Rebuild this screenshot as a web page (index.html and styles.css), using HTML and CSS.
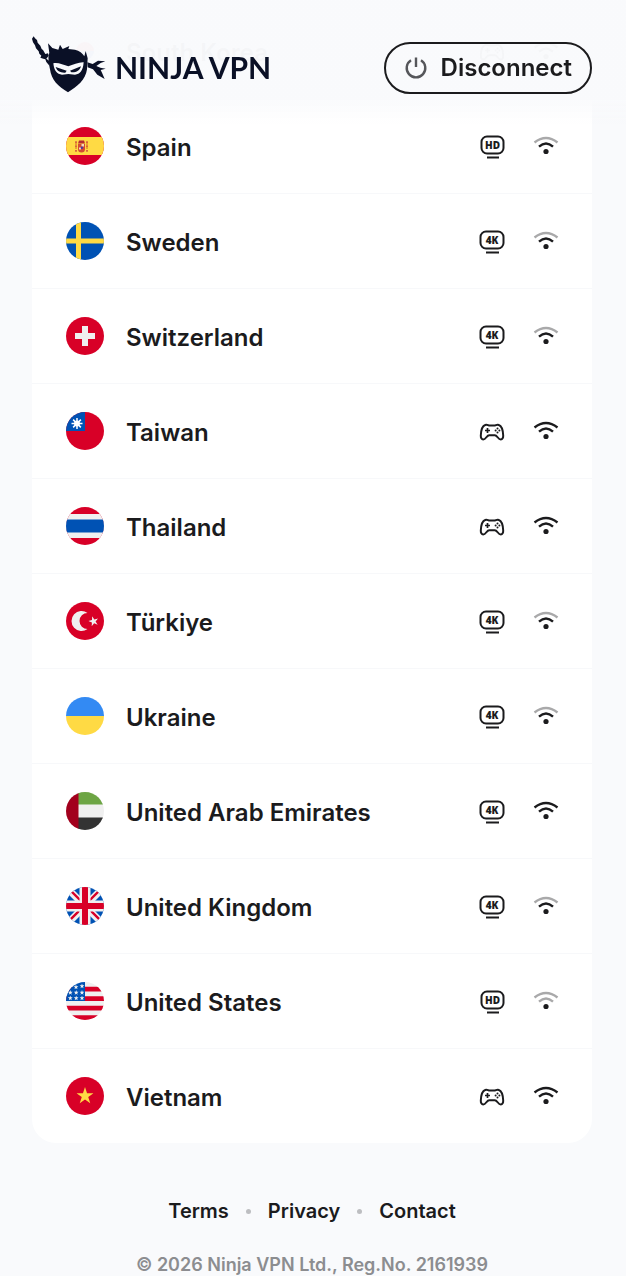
FILE: index.html
```html
<!DOCTYPE html>
<html lang="en">
<head>
<meta charset="utf-8">
<meta name="viewport" content="width=device-width, initial-scale=1">
<title>Ninja VPN</title>
<link rel="stylesheet" href="styles.css">
</head>
<body>
<svg class="sprite" aria-hidden="true">
  <symbol id="hd" viewBox="0 0 26 26">
    <rect x="2.500" y="3.500" width="22" height="17" rx="5.500" fill="none" stroke="currentColor" stroke-width="2"/>
    <path d="M8 24.500h12" stroke="currentColor" stroke-width="2"/>
    <text x="13.500" y="15.800" class="badge-text">HD</text>
  </symbol>
  <symbol id="uhd" viewBox="0 0 26 26">
    <rect x="1.500" y="3.500" width="23" height="17" rx="5.500" fill="none" stroke="currentColor" stroke-width="2"/>
    <path d="M7 24.500h13" stroke="currentColor" stroke-width="2"/>
    <text x="13" y="15.800" class="badge-text">4K</text>
  </symbol>
  <symbol id="game" viewBox="0 0 26 26">
    <path transform="translate(0 1)" d="M6.200 6C8.200 5 9 6.600 11 6.600h4C17 6.600 17.800 5 19.800 6c3.200 1 4.200 6 4.400 10.500.1 2.300-.8 4-2.400 4-2.800 0-3.500-4.300-6-4.300h-5.600c-2.500 0-3.200 4.300-6 4.300-1.600 0-2.500-1.700-2.400-4C2 12 3 7 6.200 6z" fill="none" stroke="currentColor" stroke-width="2" stroke-linejoin="round"/>
    <path d="M8.500 10v5M6 12.500h5" stroke="currentColor" stroke-width="1.700"/>
    <g fill="currentColor"><circle cx="18.500" cy="10.600" r="1"/><circle cx="18.500" cy="14.400" r="1"/><circle cx="16.600" cy="12.500" r="1"/><circle cx="20.400" cy="12.500" r="1"/></g>
  </symbol>
  <symbol id="wifi" viewBox="0 0 26 26">
    <path class="outer" d="M1.500 9.500Q13 .6 24.500 9.500"/>
    <path class="inner" d="M6 13.600Q13 7.200 20 13.600"/>
    <circle cx="13" cy="18.500" r="2.600" fill="currentColor"/>
  </symbol>
  <symbol id="star" viewBox="0 0 20 20"><path d="M10 0l2.400 7.400h7.600l-6.200 4.500 2.400 7.300L10 14.700l-6.200 4.500 2.400-7.300L0 7.400h7.600z"/></symbol>
  <symbol id="kr" viewBox="0 0 38 38"><path fill="#f0f0f0" d="M0 0h38v38H0z"/><path fill="#d80027" d="M10 19a9 9 0 0 1 18 0z"/><path fill="#0052b4" d="M10 19a9 9 0 0 0 18 0z"/></symbol>
  <symbol id="es" viewBox="0 0 38 38"><path fill="#d80027" d="M0 0h38v38H0z"/><path fill="#ffda44" d="M0 10h38v18H0z"/><path d="M10 15v9M21 15v9" stroke="#e58a2c" stroke-width="1.500" stroke-dasharray="3 1"/><path d="M9 15h2M9 24h2M20 15h2M20 24h2M9 19h2M20 19h2" stroke="#c8323c" stroke-width="1.200"/><path fill="#d34b32" d="M12 17h7v5a3.500 3.500 0 0 1-7 0z"/><path fill="#b82b32" d="M13 13.500h5l1 3h-7z"/><path fill="#f5d9bd" d="M15.500 17H18v2.500h-2.500zM13 20.500h2v2h-2z"/><circle cx="15.900" cy="20.700" r="1.200" fill="#4c3ca0"/></symbol>
  <symbol id="se" viewBox="0 0 38 38"><path fill="#0052b4" d="M0 0h38v38H0z"/><path fill="#ffda44" d="M10 0h5v38h-5zM0 16.500h38v5H0z"/></symbol>
  <symbol id="ch" viewBox="0 0 38 38"><path fill="#d80027" d="M0 0h38v38H0z"/><path fill="#f0f0f0" d="M16 9h6v7h7v6h-7v7h-6v-7H9v-6h7z"/></symbol>
  <symbol id="tw" viewBox="0 0 38 38"><path fill="#d80027" d="M0 0h38v38H0z"/><path fill="#0052b4" d="M0 0h19v19H0z"/><path stroke="#fff" stroke-width="1.500" d="M11 6v11M5.500 11.500h11M7.100 7.600l7.800 7.800M14.900 7.600l-7.800 7.800"/><circle cx="11" cy="11.500" r="2.900" fill="#fff"/></symbol>
  <symbol id="th" viewBox="0 0 38 38"><path fill="#d80027" d="M0 0h38v38H0z"/><path fill="#f0f0f0" d="M0 7h38v24H0z"/><path fill="#0052b4" d="M0 12.500h38v13H0z"/></symbol>
  <symbol id="tr" viewBox="0 0 38 38"><path fill="#d80027" d="M0 0h38v38H0z"/><path fill="#f0f0f0" d="M21.500 11A10 10 0 1 0 21.500 27a8 8 0 1 1 0-16z"/><use href="#star" x="22.500" y="14" width="10" height="10" fill="#f0f0f0" transform="rotate(-15 27.500 19)"/></symbol>
  <symbol id="ua" viewBox="0 0 38 38"><path fill="#338af3" d="M0 0h38v19H0z"/><path fill="#ffda44" d="M0 19h38v19H0z"/></symbol>
  <symbol id="ae" viewBox="0 0 38 38"><path fill="#f0f0f0" d="M0 0h38v38H0z"/><path fill="#6da544" d="M12 0h26v12.500H12z"/><path fill="#333" d="M12 25.500h26V38H12z"/><path fill="#a2001d" d="M0 0h12.500v38H0z"/></symbol>
  <symbol id="gb" viewBox="0 0 38 38"><path fill="#0052b4" d="M0 0h38v38H0z"/><path stroke="#f0f0f0" stroke-width="7" d="M0 0l38 38M38 0L0 38"/><path stroke="#d80027" stroke-width="2.400" d="M1 0l38 38M37 0L-1 38"/><path fill="#f0f0f0" d="M13.500 0h11v38h-11zM0 13.500h38v11H0z"/><path fill="#d80027" d="M16 0h6v38h-6zM0 16h38v6H0z"/></symbol>
  <symbol id="us" viewBox="0 0 38 38"><path fill="#f0f0f0" d="M0 0h38v38H0z"/><path fill="#d80027" d="M0 4.800h38v4.800H0zM0 14.300h38v4.800H0zM0 23.800h38v4.800H0zM0 33.300h38V38H0z"/><path fill="#0052b4" d="M0 0h19v19H0z"/><g fill="#f0f0f0"><use href="#star" x="7.500" y="2.500" width="5" height="5"/><use href="#star" x="13.500" y="1.500" width="5" height="5"/><use href="#star" x="1.800" y="8" width="5" height="5"/><use href="#star" x="7.700" y="8" width="5" height="5"/><use href="#star" x="13.500" y="8" width="5" height="5"/><use href="#star" x="1.800" y="13.500" width="5" height="5"/><use href="#star" x="7.700" y="13.500" width="5" height="5"/><use href="#star" x="13.500" y="13.500" width="5" height="5"/></g></symbol>
  <symbol id="vn" viewBox="0 0 38 38"><path fill="#d80027" d="M0 0h38v38H0z"/><use href="#star" x="10.500" y="10" width="17" height="17" fill="#ffda44"/></symbol>
</svg>

<header class="topbar">
  <a class="brand" href="#">
    <svg class="ninja" viewBox="36 44 225 171" aria-hidden="true">
      <path fill="#0a1026" d="M41 45l-5 7 3 11 6 9 3 9 8 9 2 7 6 6-3 6 9 3 6 2 3 8 10 12-1-15-9-7 7-9-2-7-8 2-7-12-4-3-4-10-8-9-2-8-6-5z"/>
      <path fill="#0a1026" d="M84 66l13 14 18 5 5-15 8 13 20-9-3 9 20 2c13 3 23 11 28 20l4-16 6 22-2 33c-4 32-30 52-57 69-29-17-50-37-54-69-4-22-7-40-2-49z"/>
      <path fill="#f9fafc" d="M100 126c14-3 31 5 45 9 14-4 32-13 46-12-2 25-11 36-26 37l-20-2-19 2c-15-1-24-12-26-34z"/>
      <path fill="#0a1026" d="M107 137l33 11-4 6c-15 1-25-5-29-17zM183 135l-33 13 4 5c15 1 25-5 29-18z"/>
      <path fill="#0a1026" d="M202 123l16 5 16-10 22 2-14 5-13 9 12 5 16 3-15 4 4 8 8 19-22-13-13-16-16-6z"/>
    </svg>
    <span class="wordmark">NINJA VPN</span>
  </a>
  <button class="disconnect" type="button">
    <svg class="power" viewBox="0 0 24 24" aria-hidden="true"><path d="M7 4.200a9.300 9.300 0 1 0 10 0M12 1.500v9.500" fill="none" stroke="#55565a" stroke-width="2.400"/></svg>
    Disconnect
  </button>
</header>

<main class="page">
  <ul class="servers">
    <li><button class="server" type="button"><svg class="flag"><use href="#kr"/></svg><span class="name">South Korea</span><svg class="icon"><use href="#game"/></svg><svg class="icon full"><use href="#wifi"/></svg></button></li>
    <li><button class="server" type="button"><svg class="flag"><use href="#es"/></svg><span class="name">Spain</span><svg class="icon"><use href="#hd"/></svg><svg class="icon medium"><use href="#wifi"/></svg></button></li>
    <li><button class="server" type="button"><svg class="flag"><use href="#se"/></svg><span class="name">Sweden</span><svg class="icon"><use href="#uhd"/></svg><svg class="icon medium"><use href="#wifi"/></svg></button></li>
    <li><button class="server" type="button"><svg class="flag"><use href="#ch"/></svg><span class="name">Switzerland</span><svg class="icon"><use href="#uhd"/></svg><svg class="icon medium"><use href="#wifi"/></svg></button></li>
    <li><button class="server" type="button"><svg class="flag"><use href="#tw"/></svg><span class="name">Taiwan</span><svg class="icon"><use href="#game"/></svg><svg class="icon full"><use href="#wifi"/></svg></button></li>
    <li><button class="server" type="button"><svg class="flag"><use href="#th"/></svg><span class="name">Thailand</span><svg class="icon"><use href="#game"/></svg><svg class="icon full"><use href="#wifi"/></svg></button></li>
    <li><button class="server" type="button"><svg class="flag"><use href="#tr"/></svg><span class="name">Türkiye</span><svg class="icon"><use href="#uhd"/></svg><svg class="icon medium"><use href="#wifi"/></svg></button></li>
    <li><button class="server" type="button"><svg class="flag"><use href="#ua"/></svg><span class="name">Ukraine</span><svg class="icon"><use href="#uhd"/></svg><svg class="icon medium"><use href="#wifi"/></svg></button></li>
    <li><button class="server" type="button"><svg class="flag"><use href="#ae"/></svg><span class="name">United Arab Emirates</span><svg class="icon"><use href="#uhd"/></svg><svg class="icon full"><use href="#wifi"/></svg></button></li>
    <li><button class="server" type="button"><svg class="flag"><use href="#gb"/></svg><span class="name">United Kingdom</span><svg class="icon"><use href="#uhd"/></svg><svg class="icon medium"><use href="#wifi"/></svg></button></li>
    <li><button class="server" type="button"><svg class="flag"><use href="#us"/></svg><span class="name">United States</span><svg class="icon"><use href="#hd"/></svg><svg class="icon low"><use href="#wifi"/></svg></button></li>
    <li><button class="server" type="button"><svg class="flag"><use href="#vn"/></svg><span class="name">Vietnam</span><svg class="icon"><use href="#game"/></svg><svg class="icon full"><use href="#wifi"/></svg></button></li>
  </ul>
</main>

<footer class="footer">
  <nav class="links">
    <a href="#">Terms</a><span class="dot"></span><a href="#">Privacy</a><span class="dot"></span><a href="#">Contact</a>
  </nav>
  <p class="legal">© 2026 Ninja VPN Ltd., Reg.No. 2161939</p>
</footer>
</body>
</html>
```

FILE: styles.css
```css
* {
  box-sizing: border-box;
}

body {
  margin: 0;
  background: #f9fafc;
  color: #1b1b1d;
  font-family: Inter, "Liberation Sans", sans-serif;
  font-weight: 600;
}

a {
  color: inherit;
  text-decoration: none;
}

button {
  font: inherit;
  color: inherit;
  cursor: pointer;
}

.sprite {
  position: absolute;
  width: 0;
  height: 0;
}

.topbar {
  position: fixed;
  z-index: 1;
  top: 0;
  left: 0;
  right: 0;
  display: flex;
  justify-content: space-between;
  align-items: center;
  padding: 34px 34px 30px 32px;
  background: linear-gradient(rgba(249, 250, 252, 0.98) 78%, rgba(249, 250, 252, 0));
}

.brand {
  display: flex;
  align-items: center;
  gap: 8px;
}

.ninja {
  width: 75px;
  height: 57px;
}

.wordmark {
  padding-top: 6px;
  color: #0a1026;
  font-family: Lato, sans-serif;
  font-size: 30px;
  font-weight: 700;
  line-height: 34px;
}

.disconnect {
  display: flex;
  align-items: center;
  gap: 13px;
  margin-top: 8px;
  padding: 10px 18px;
  border: 2px solid #1b1b1d;
  border-radius: 26px;
  background: transparent;
  font-size: 24px;
  line-height: 28px;
}

.power {
  width: 24px;
  height: 24px;
}

.page {
  padding: 4px 34px 0 32px;
}

.servers {
  margin: 0;
  padding: 0;
  overflow: hidden;
  border-radius: 0 0 24px 24px;
  background: #fff;
  list-style: none;
}

.servers li + li {
  border-top: 1px solid #f7f8fa;
}

.server {
  display: flex;
  align-items: center;
  gap: 28px;
  width: 100%;
  padding: 28px 33px 28px 34px;
  border: 0;
  background: none;
  font-size: 24px;
  line-height: 32px;
  text-align: left;
}

.flag {
  flex: none;
  width: 38px;
  height: 38px;
  margin-right: -6px;
  border-radius: 50%;
}

.name {
  flex: 1;
  padding-top: 3px;
}

.icon {
  flex: none;
  width: 26px;
  height: 26px;
}

.badge-text {
  fill: currentColor;
  font: 800 10px "Open Sans", sans-serif;
  text-anchor: middle;
}

.outer,
.inner {
  fill: none;
  stroke: currentColor;
  stroke-width: 2.4px;
}

.outer {
  stroke: var(--outer, currentColor);
}

.inner {
  stroke: var(--inner, currentColor);
}

.medium {
  --outer: #a9a9aa;
}

.low {
  --outer: #a9a9aa;
  --inner: #a9a9aa;
}

.footer {
  display: flex;
  flex-direction: column;
  align-items: center;
  gap: 30px;
  padding: 56px 34px 0 32px;
}

.links {
  display: flex;
  align-items: center;
  gap: 17px;
  font-size: 20px;
  line-height: 24px;
}

.dot {
  width: 5px;
  height: 5px;
  border-radius: 50%;
  background: #bdbec1;
}

.legal {
  margin: 0;
  color: #8c8d90;
  font-size: 18px;
  line-height: 24px;
}
```
